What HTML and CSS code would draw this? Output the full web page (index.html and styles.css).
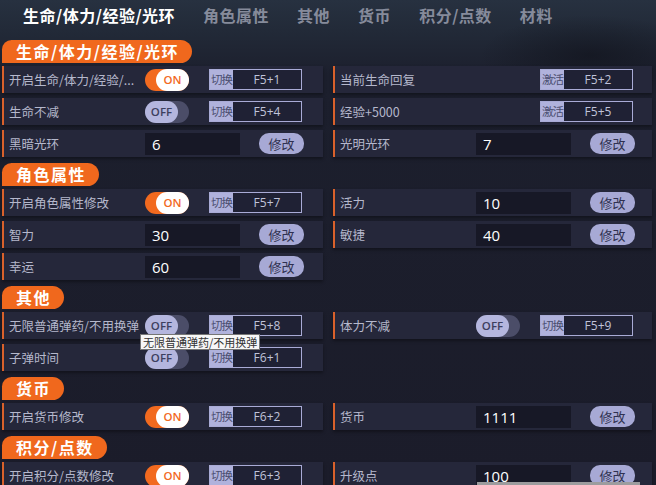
FILE: index.html
```html
<!DOCTYPE html>
<html>
<head>
    <title>修改器</title>
    <link rel="stylesheet" href="styles.css">
</head>
<body>
    <nav class="tabs">
        <span class="tab active">生命/体力/经验/光环</span>
        <span class="tab">角色属性</span>
        <span class="tab">其他</span>
        <span class="tab">货币</span>
        <span class="tab">积分/点数</span>
        <span class="tab">材料</span>
    </nav>

    <section class="group">
        <div class="group-title">生命/体力/经验/光环</div>
        <div class="grid">
            <div class="row">
                <span class="label" title="开启生命/体力/经验/光环修改">开启生命/体力/经验/...</span>
                <span class="switch on"><span class="knob">ON</span></span>
                <span class="hotkey"><span class="hk-tag">切换</span><span class="hk-key">F5+1</span></span>
            </div>
            <div class="row">
                <span class="label">当前生命回复</span>
                <span class="slot"></span>
                <span class="hotkey"><span class="hk-tag">激活</span><span class="hk-key">F5+2</span></span>
            </div>
            <div class="row">
                <span class="label">生命不减</span>
                <span class="switch"><span class="knob">OFF</span></span>
                <span class="hotkey"><span class="hk-tag">切换</span><span class="hk-key">F5+4</span></span>
            </div>
            <div class="row">
                <span class="label">经验+5000</span>
                <span class="slot"></span>
                <span class="hotkey"><span class="hk-tag">激活</span><span class="hk-key">F5+5</span></span>
            </div>
            <div class="row">
                <span class="label">黑暗光环</span>
                <span class="value">6</span>
                <button class="btn">修改</button>
            </div>
            <div class="row">
                <span class="label">光明光环</span>
                <span class="value">7</span>
                <button class="btn">修改</button>
            </div>
        </div>
    </section>

    <section class="group">
        <div class="group-title">角色属性</div>
        <div class="grid">
            <div class="row">
                <span class="label">开启角色属性修改</span>
                <span class="switch on"><span class="knob">ON</span></span>
                <span class="hotkey"><span class="hk-tag">切换</span><span class="hk-key">F5+7</span></span>
            </div>
            <div class="row">
                <span class="label">活力</span>
                <span class="value">10</span>
                <button class="btn">修改</button>
            </div>
            <div class="row">
                <span class="label">智力</span>
                <span class="value">30</span>
                <button class="btn">修改</button>
            </div>
            <div class="row">
                <span class="label">敏捷</span>
                <span class="value">40</span>
                <button class="btn">修改</button>
            </div>
            <div class="row">
                <span class="label">幸运</span>
                <span class="value">60</span>
                <button class="btn">修改</button>
            </div>
        </div>
    </section>

    <section class="group">
        <div class="group-title">其他</div>
        <div class="grid">
            <div class="row">
                <span class="label">无限普通弹药/不用换弹</span>
                <span class="switch"><span class="knob">OFF</span></span>
                <span class="hotkey"><span class="hk-tag">切换</span><span class="hk-key">F5+8</span></span>
            </div>
            <div class="row">
                <span class="label">体力不减</span>
                <span class="switch"><span class="knob">OFF</span></span>
                <span class="hotkey"><span class="hk-tag">切换</span><span class="hk-key">F5+9</span></span>
            </div>
            <div class="row">
                <span class="label">子弹时间</span>
                <span class="switch"><span class="knob">OFF</span></span>
                <span class="hotkey"><span class="hk-tag">切换</span><span class="hk-key">F6+1</span></span>
            </div>
        </div>
    </section>

    <section class="group">
        <div class="group-title">货币</div>
        <div class="grid">
            <div class="row">
                <span class="label">开启货币修改</span>
                <span class="switch on"><span class="knob">ON</span></span>
                <span class="hotkey"><span class="hk-tag">切换</span><span class="hk-key">F6+2</span></span>
            </div>
            <div class="row">
                <span class="label">货币</span>
                <span class="value">1111</span>
                <button class="btn">修改</button>
            </div>
        </div>
    </section>

    <section class="group">
        <div class="group-title">积分/点数</div>
        <div class="grid">
            <div class="row">
                <span class="label">开启积分/点数修改</span>
                <span class="switch on"><span class="knob">ON</span></span>
                <span class="hotkey"><span class="hk-tag">切换</span><span class="hk-key">F6+3</span></span>
            </div>
            <div class="row">
                <span class="label">升级点</span>
                <span class="value">100</span>
                <button class="btn">修改</button>
            </div>
        </div>
    </section>

    <div class="tooltip">无限普通弹药/不用换弹</div>
    <div class="tooltip-edge"></div>
</body>
</html>
```

FILE: styles.css
```css
    body {
        margin: 0;
        width: 656px;
        height: 485px;
        overflow: hidden;
        position: relative;
        background:
            radial-gradient(ellipse 110px 40px at 590px 55px, rgba(14, 16, 24, 0.55), rgba(14, 16, 24, 0) 100%),
            linear-gradient(180deg, #273140 0px, #222a38 30px, #1c1f2d 75px, #1b1c2a 100%);
        color: #b5b8cc;
        font-family: "Noto Sans CJK SC", "Noto Sans", sans-serif;
        padding-left: 2px;
        box-sizing: border-box;
    }
    .tabs {
        display: flex;
        gap: 28px;
        height: 30px;
        align-items: center;
        padding-left: 21px;
        margin-bottom: 10px;
    }
    .tab {
        font-size: 16px;
        font-weight: bold;
        color: #868b9b;
        letter-spacing: 0.5px;
    }
    .tab.active {
        color: #ffffff;
    }

    .group {
        margin-bottom: 6px;
    }
    .group-title {
        width: fit-content;
        height: 23px;
        line-height: 23px;
        padding: 0 13px 0 14px;
        background-color: #f0681d;
        color: #ffffff;
        font-size: 16px;
        font-weight: bold;
        letter-spacing: 1.5px;
        border-radius: 10px 12px 12px 0;
        margin-bottom: 3px;
    }
    .grid {
        display: grid;
        grid-template-columns: 321px 319px;
        column-gap: 10px;
        row-gap: 5px;
    }
    .row {
        display: flex;
        align-items: center;
        height: 27px;
        background-color: #25273a;
        border-left: 2px solid #d9612b;
        box-shadow: 0 2px 3px rgba(0, 0, 0, 0.35);
    }
    .label {
        width: 141px;
        flex: none;
        box-sizing: border-box;
        padding-left: 5px;
        font-size: 12.5px;
        white-space: nowrap;
        overflow: hidden;
    }
    .slot {
        width: 64px;
        flex: none;
    }

    .switch {
        width: 44px;
        height: 22px;
        flex: none;
        margin-right: 20px;
        border-radius: 11px;
        background-color: #4b4d68;
        display: flex;
        justify-content: flex-start;
    }
    .switch.on {
        background-color: #f26a1f;
        justify-content: flex-end;
    }
    .knob {
        width: 33px;
        height: 22px;
        border-radius: 11px;
        background-color: #b4b6de;
        color: #3d405e;
        font-family: "Open Sans", "Liberation Sans", sans-serif;
        font-size: 11.5px;
        font-weight: 600;
        line-height: 22px;
        text-align: center;
    }
    .switch.on .knob {
        background-color: #ffffff;
        color: #f26a1f;
    }

    .hotkey {
        width: 93px;
        height: 21px;
        flex: none;
        box-sizing: border-box;
        display: flex;
        border: 1px solid #a9abd6;
        background-color: #1f2134;
    }
    .hk-tag {
        width: 23px;
        background-color: #b0b2dc;
        color: #4b4e70;
        font-size: 11.5px;
        line-height: 19px;
        text-align: center;
        letter-spacing: -1px;
    }
    .hk-key {
        flex: 1;
        color: #c0c3da;
        font-family: "Open Sans", "Liberation Sans", sans-serif;
        font-size: 12px;
        line-height: 19px;
        text-align: center;
    }

    .value {
        width: 95px;
        height: 22px;
        flex: none;
        box-sizing: border-box;
        margin-right: 19px;
        padding-left: 7px;
        background-color: #171826;
        color: #ffffff;
        font-family: "Open Sans", "Liberation Sans", sans-serif;
        font-size: 15px;
        line-height: 22px;
    }
    .btn {
        width: 45px;
        height: 21px;
        flex: none;
        padding: 0;
        border: none;
        border-radius: 10px;
        background-color: #a7a9d5;
        color: #2f3150;
        font-family: "Noto Sans CJK SC", sans-serif;
        font-size: 13px;
        line-height: 21px;
        cursor: pointer;
    }

    .tooltip {
        position: absolute;
        left: 140px;
        top: 334px;
        padding: 0 2px;
        background-color: #f7f7f7;
        border: 1px solid #767676;
        color: #333333;
        font-size: 11px;
        line-height: 14px;
        white-space: nowrap;
    }
    .tooltip-edge {
        position: absolute;
        left: 477px;
        top: 482px;
        width: 163px;
        height: 3px;
        background-color: #9c9c9e;
    }
```
